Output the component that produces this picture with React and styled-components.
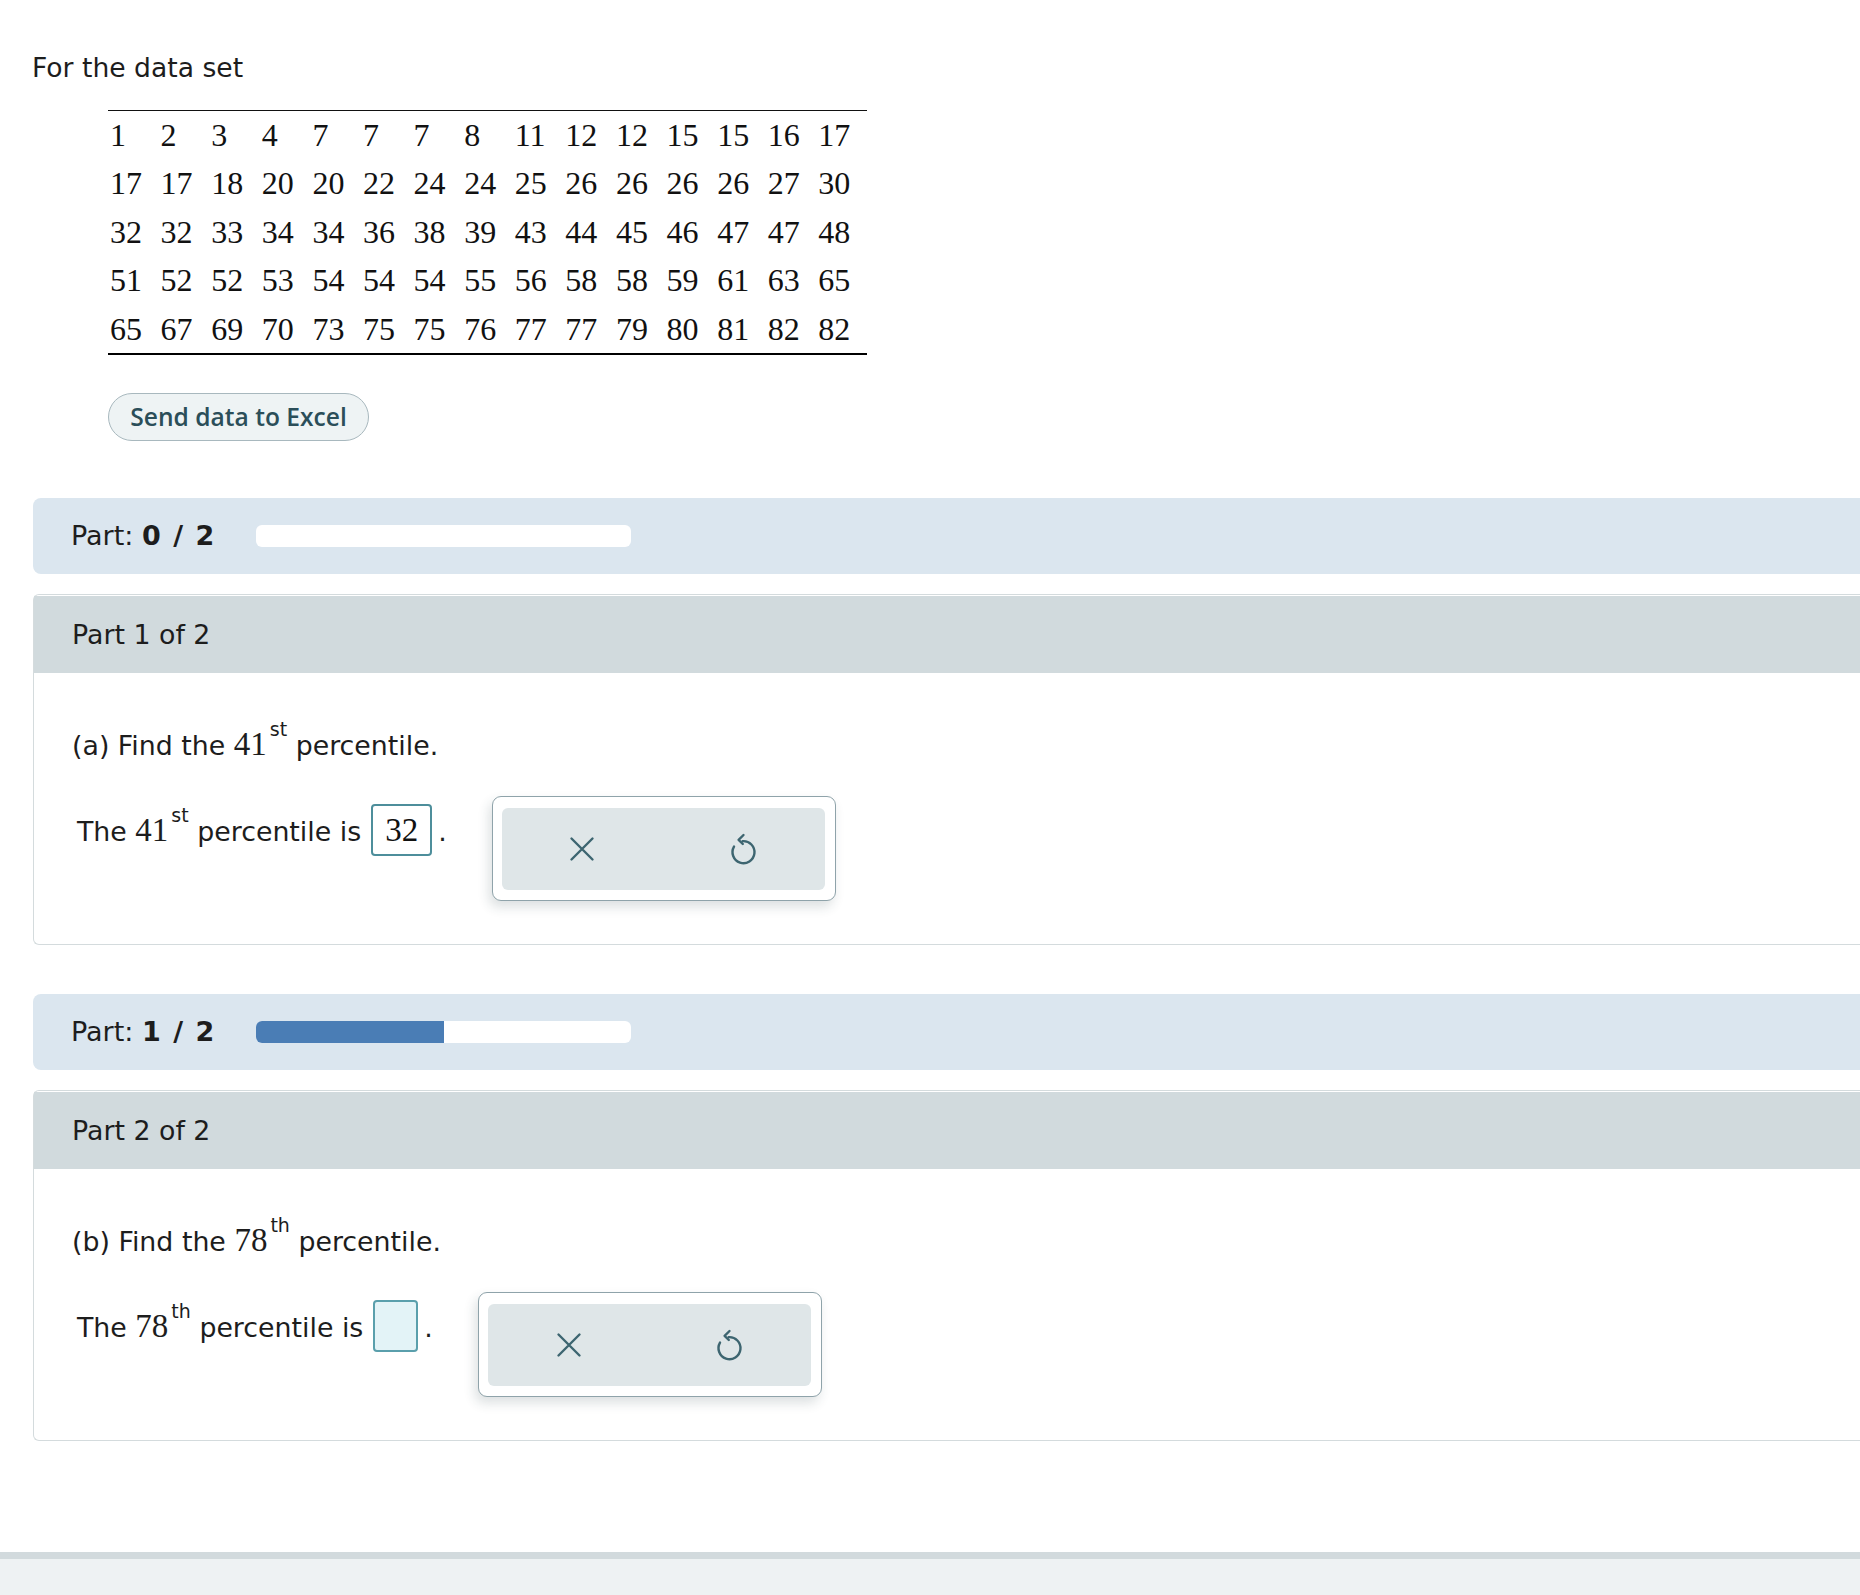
import React from 'react';
import styled, { createGlobalStyle } from 'styled-components';

const GlobalStyle = createGlobalStyle`
    html, body {
        margin: 0;
        padding: 0;
        background: #ffffff;
        overflow: hidden;
    }
    body {
        font-family: "DejaVu Sans", Verdana, sans-serif;
        color: #1d1d1d;
    }
`;

const Page = styled.div`
    padding: 53px 0 0 33px;
    margin-right: -40px;
`;

const Intro = styled.div`
    font-size: 26.6px;
    line-height: 30px;
    margin-left: -1px;
`;

const DataTable = styled.div`
    display: grid;
    grid-template-columns: repeat(15, 50.6px);
    grid-auto-rows: 48.4px;
    width: 759px;
    margin: 27px 0 0 75px;
    border-top: 1px solid #111;
    border-bottom: 2px solid #000;
    font-family: "Liberation Serif", "Times New Roman", serif;
    font-size: 32px;
    line-height: 48.4px;
    color: #111;
`;

const Cell = styled.div`
    text-align: left;
    padding-left: 2px;
`;

const ExcelButton = styled.button`
    display: flex;
    align-items: center;
    justify-content: center;
    height: 48px;
    width: 261px;
    margin: 38px 0 0 75px;
    padding: 0;
    box-sizing: border-box;
    border: 1px solid #a8b8be;
    border-radius: 24px;
    background: #eef3f4;
    color: #2b4e59;
    font-family: "Open Sans", "Liberation Sans", sans-serif;
    font-weight: 600;
    font-size: 24.6px;
`;

const ProgressBar = styled.div`
    display: flex;
    align-items: center;
    height: 76px;
    margin-top: ${p => p.$top}px;
    padding-left: 38px;
    background: #dbe6ef;
    border-radius: 8px 0 0 8px;
    font-size: 27px;
`;

const ProgressLabel = styled.span`
    white-space: pre;
    b {
        font-weight: 700;
        word-spacing: 3px;
    }
`;

const Track = styled.div`
    width: 375px;
    height: 22px;
    margin-left: 42px;
    background: #ffffff;
    border-radius: 6px;
    overflow: hidden;
`;

const TrackFill = styled.div`
    height: 100%;
    background: #4a7db5;
`;

const Card = styled.section`
    margin-top: 20px;
    padding-top: 1px;
    border: 1px solid #d4dbdd;
    border-right: none;
    border-radius: 6px 0 0 6px;
    background: #ffffff;
`;

const CardHeader = styled.div`
    display: flex;
    align-items: center;
    height: 77px;
    padding-left: 38px;
    background: #d1dadd;
    font-size: 26.8px;
`;

const CardBody = styled.div`
    padding: 47px 0 43px 38px;
`;

const Question = styled.div`
    font-size: 26.8px;
    line-height: 32px;
`;

const MathNum = styled.span`
    font-family: "Liberation Serif", "Times New Roman", serif;
    font-size: 33px;
`;

const Sup = styled.sup`
    font-size: 19px;
    line-height: 1;
    vertical-align: 19px;
    margin-left: 3px;
`;

const AnswerRow = styled.div`
    display: flex;
    align-items: flex-start;
    margin: 34px 0 0 5px;
`;

const FillLine = styled.div`
    display: flex;
    align-items: baseline;
    margin-top: 8px;
    font-size: 26.8px;
    line-height: 32px;
`;

const AnswerBox = styled.div`
    box-sizing: border-box;
    min-width: 45px;
    height: 52px;
    margin-left: 10px;
    padding: 0 12px;
    border: 2px solid ${p => (p.$empty ? '#5a9fac' : '#4d8e9b')};
    border-radius: 4px;
    background: ${p => (p.$empty ? '#e3f3f7' : '#ffffff')};
    font-family: "Liberation Serif", "Times New Roman", serif;
    font-size: 33px;
    line-height: 48px;
    color: #111;
`;

const Period = styled.span`
    margin-left: 6px;
`;

const Toolbar = styled.div`
    box-sizing: border-box;
    width: 344px;
    height: 105px;
    margin-left: 45px;
    padding: 11px 10px 10px 9px;
    border: 1px solid #8fa3aa;
    border-radius: 9px;
    background: #ffffff;
    box-shadow: -3px 6px 12px rgba(40, 60, 70, 0.16);
`;

const ToolbarInner = styled.div`
    display: flex;
    height: 100%;
    background: #dfe6e8;
    border-radius: 6px;
`;

const ToolButton = styled.button`
    flex: 1;
    display: flex;
    align-items: center;
    justify-content: center;
    background: transparent;
    border: none;
    padding: 0;
    color: #3d6570;
`;

const Footer = styled.div`
    margin-top: 111px;
    height: 80px;
    border-top: 7px solid #d2dadd;
    background: #eef2f3;
`;

const rows = [
    [1, 2, 3, 4, 7, 7, 7, 8, 11, 12, 12, 15, 15, 16, 17],
    [17, 17, 18, 20, 20, 22, 24, 24, 25, 26, 26, 26, 26, 27, 30],
    [32, 32, 33, 34, 34, 36, 38, 39, 43, 44, 45, 46, 47, 47, 48],
    [51, 52, 52, 53, 54, 54, 54, 55, 56, 58, 58, 59, 61, 63, 65],
    [65, 67, 69, 70, 73, 75, 75, 76, 77, 77, 79, 80, 81, 82, 82],
];

function ClearIcon() {
    return (
        <svg width="26" height="26" viewBox="0 0 26 26" fill="none" stroke="currentColor" strokeWidth="2.4" strokeLinecap="round">
            <path d="M2.5 2.5 L23.5 23.5 M23.5 2.5 L2.5 23.5" />
        </svg>
    );
}

function UndoIcon() {
    return (
        <svg width="28" height="34" viewBox="0 0 28 34" fill="none" stroke="currentColor" strokeWidth="2.4" strokeLinecap="round" strokeLinejoin="round">
            <path d="M12.5 9.2 A11 11 0 1 1 4 14.6" />
            <path d="M13.5 3 L8.6 7.8 L12.8 12" />
        </svg>
    );
}

function Progress({ done, total, top }) {
    return (
        <ProgressBar $top={top}>
            <ProgressLabel>Part: <b>{done} / {total}</b></ProgressLabel>
            <Track>
                <TrackFill style={{ width: `${(done / total) * 100}%` }} />
            </Track>
        </ProgressBar>
    );
}

function PartCard({ index, letter, rank, suffix, answer }) {
    return (
        <Card>
            <CardHeader>Part {index} of 2</CardHeader>
            <CardBody>
                <Question>
                    ({letter}) Find the <MathNum>{rank}</MathNum><Sup>{suffix}</Sup> percentile.
                </Question>
                <AnswerRow>
                    <FillLine>
                        <span>The <MathNum>{rank}</MathNum><Sup>{suffix}</Sup> percentile is</span>
                        <AnswerBox $empty={!answer}>{answer || '\u200b'}</AnswerBox>
                        <Period>.</Period>
                    </FillLine>
                    <Toolbar>
                        <ToolbarInner>
                            <ToolButton aria-label="Clear"><ClearIcon /></ToolButton>
                            <ToolButton aria-label="Undo"><UndoIcon /></ToolButton>
                        </ToolbarInner>
                    </Toolbar>
                </AnswerRow>
            </CardBody>
        </Card>
    );
}

export default function App() {
    return (
        <>
            <GlobalStyle />
            <Page>
                <Intro>For the data set</Intro>
                <DataTable>
                    {rows.flat().map((n, i) => <Cell key={i}>{n}</Cell>)}
                </DataTable>
                <ExcelButton>Send data to Excel</ExcelButton>
                <Progress done={0} total={2} top={57} />
                <PartCard index={1} letter="a" rank={41} suffix="st" answer="32" />
                <Progress done={1} total={2} top={49} />
                <PartCard index={2} letter="b" rank={78} suffix="th" answer="" />
            </Page>
            <Footer />
        </>
    );
}
